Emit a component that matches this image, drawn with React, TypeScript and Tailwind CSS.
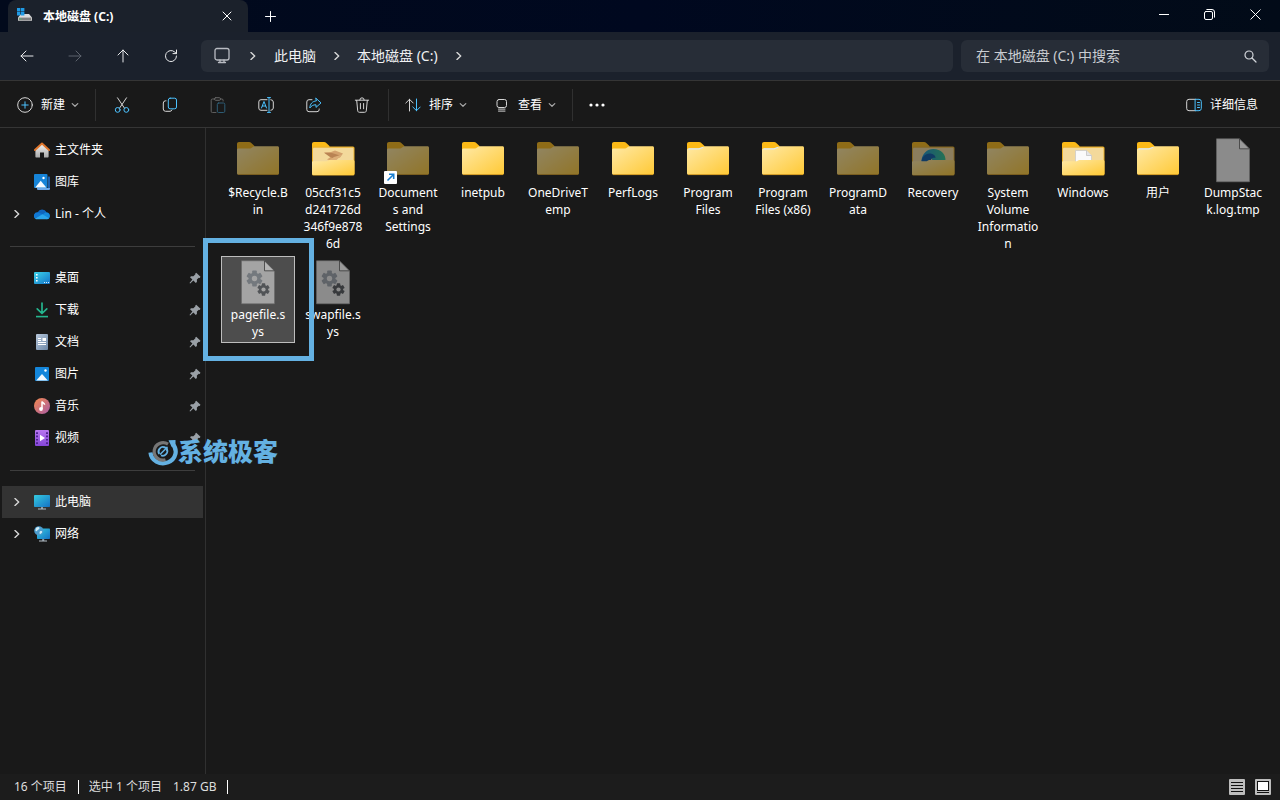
import type { ReactNode } from "react";
import clsx from "clsx";

const BLUE = "#4cc2ff";

/* ---------- small line icons ---------- */

function Line({ children, size = 16, className }: { children: ReactNode; size?: number; className?: string }) {
  return (
    <svg
      width={size}
      height={size}
      viewBox={`0 0 ${size} ${size}`}
      fill="none"
      stroke="currentColor"
      strokeLinecap="round"
      strokeLinejoin="round"
      aria-hidden="true"
      className={clsx("shrink-0", className)}
    >
      {children}
    </svg>
  );
}

function ChevronRight() {
  return (
    <Line size={8} className="text-[#d8d8d8]">
      <path d="M2 0.5 5.7 4 2 7.5" strokeWidth="1.4" />
    </Line>
  );
}

function ChevronDown() {
  return (
    <Line size={8} className="text-[#a8a8a8]">
      <path d="M1.2 2.6 4 5.3 6.8 2.6" strokeWidth="1.2" />
    </Line>
  );
}

function PinIcon() {
  return (
    <svg width="12" height="12" viewBox="0 0 12 12" fill="#9aa0a6" aria-hidden="true" className="mr-0.5 shrink-0">
      <path d="M7.2.7 11.5 4.8 10.7 5.9 9.8 5.7 7.9 7.6 7.9 9.900 6.8 11 4.400 8.600 1.200 11.600.5 11 3.400 7.600 1 5.300 2 4.200 4.400 4.200 6.400 2.300 6.300 1.500Z" />
    </svg>
  );
}

function DriveIcon() {
  return (
    <svg width="16" height="16" viewBox="0 0 16 16" aria-hidden="true" className="shrink-0">
      <path d="M4 6h8l3 3.500H1z" fill="#dcdcdc" />
      <path d="M1 9.200h14v3.600H1z" fill="#c4c4c4" />
      <path d="M2 10.200h12v1.600H2z" fill="#6f6f6f" />
      <path d="M2.400 10.500h2v1h-2z" fill="#49c26a" />
      <path d="M0 0h3.400v3.400H0zM4 0h3.400v3.400H4zM0 4h3.400v3.400H0zM4 4h3.400v3.400H4z" fill="#1f9be6" />
    </svg>
  );
}

/* ---------- sidebar icons ---------- */

function SideIcon({ children }: { children: ReactNode }) {
  return (
    <svg width="16" height="16" viewBox="0 0 16 16" aria-hidden="true" className="shrink-0">
      {children}
    </svg>
  );
}

function HomeIcon() {
  return (
    <SideIcon>
      <defs>
        <linearGradient id="home" x1="0" y1="0" x2="0" y2="1">
          <stop stopColor="#f4f4f4" />
          <stop offset="1" stopColor="#a9a9a9" />
        </linearGradient>
      </defs>
      <path d="M8 1.8 1.4 8v6.600c0 .6.4 1 1 1H6V10.500h4v5.100h3.600c.6 0 1-.4 1-1V8z" fill="url(#home)" />
      <path d="M.9 8 8 1.500 15.100 8" fill="none" stroke="#e0762c" strokeWidth="1.900" strokeLinecap="round" strokeLinejoin="round" />
    </SideIcon>
  );
}

function GalleryIcon() {
  return (
    <SideIcon>
      <path d="M3 14h12V3.500c.6 0 1 .4 1 1V15a1 1 0 0 1-1 1H4a1 1 0 0 1-1-1z" fill="#6aa7e8" />
      <path d="M14 2.500h1c.6 0 1 .4 1 1V14h-2z" fill="#1b5fae" />
      <rect width="13.500" height="14" rx="1" fill="#1684d8" />
      <path d="M1.200 13.500 6.700 6.800l5.600 6.700z" fill="#f2f9ff" />
      <circle cx="9.500" cy="4" r="1.200" fill="#fff" />
    </SideIcon>
  );
}

function CloudIcon() {
  return (
    <SideIcon>
      <path d="M3.600 6.500a5 5 0 0 1 9-.2L9 10H2z" fill="#0f65bd" />
      <path d="M3.800 6.300A3.600 3.600 0 0 0 1 12.600L9.500 8.500z" fill="#1078d4" />
      <path d="M8.700 8.200 12 6.300c2.300 0 4 1.500 4 3.600 0 1.900-1.300 3.300-3.300 3.300z" fill="#1488dc" />
      <path d="M.9 12.400 8.500 8.200l6.600 4c-.6.700-1.400 1-2.400 1H3.600c-1.200 0-2.100-.2-2.700-.8z" fill="#2ba6ec" />
    </SideIcon>
  );
}

function DesktopIcon() {
  return (
    <SideIcon>
      <defs>
        <linearGradient id="desk" x1="0" y1="0" x2="1" y2="1">
          <stop stopColor="#3cd4ea" />
          <stop offset="1" stopColor="#1372c8" />
        </linearGradient>
      </defs>
      <rect y="2" width="16" height="12" rx="1" fill="url(#desk)" />
      <path d="M2 4h1.600v1.600H2zM2 7h1.600v1.600H2zM2 10h1.600v1.600H2z" fill="#fff" />
      <path d="M10 12h1v1h-1zM12 12h1v1h-1zM14 12h1v1h-1z" fill="#d5efff" />
    </SideIcon>
  );
}

function DownloadIcon() {
  return (
    <SideIcon>
      <path d="M8 1v10M3.200 6.800 8 11.500l4.800-4.700" fill="none" stroke="#25b58e" strokeWidth="1.700" strokeLinecap="round" strokeLinejoin="round" />
      <path d="M2 14.600h12" stroke="#25b58e" strokeWidth="1.600" />
    </SideIcon>
  );
}

function DocumentIcon() {
  return (
    <SideIcon>
      <defs>
        <linearGradient id="docs" x1="0" y1="0" x2="1" y2="1">
          <stop stopColor="#b8c8dc" />
          <stop offset="1" stopColor="#6c87a6" />
        </linearGradient>
      </defs>
      <rect x="2" width="12" height="16" rx="1" fill="url(#docs)" />
      <path d="M4 4h3v1H4zM4 6h3v1H4zM4 8h8v1H4zM4 10h8v1H4zM8.500 4H12v3H8.500z" fill="#fff" />
    </SideIcon>
  );
}

function PictureIcon() {
  return (
    <SideIcon>
      <rect x="1" y="1" width="14" height="14" rx="1" fill="#1486da" />
      <path d="M2.200 14.500 8 8l5.800 6.500z" fill="#f3faff" />
      <circle cx="11.500" cy="4.500" r="1.200" fill="#fff" />
    </SideIcon>
  );
}

function MusicIcon() {
  return (
    <SideIcon>
      <defs>
        <linearGradient id="music" x1="0" y1="0" x2="1" y2="1">
          <stop stopColor="#f58a4e" />
          <stop offset="1" stopColor="#a75ba5" />
        </linearGradient>
      </defs>
      <circle cx="8" cy="8" r="8" fill="url(#music)" />
      <circle cx="7" cy="11" r="1.900" fill="#fff" />
      <path d="M8 11V3.500c.4 1.500 2.600 1.500 2.600 3.300" fill="none" stroke="#fff" strokeWidth="1.500" />
    </SideIcon>
  );
}

function VideoIcon() {
  return (
    <SideIcon>
      <defs>
        <linearGradient id="video" x1="0" y1="0" x2="0" y2="1">
          <stop stopColor="#b877ef" />
          <stop offset="1" stopColor="#8546d8" />
        </linearGradient>
      </defs>
      <rect x="1" width="14" height="16" rx="1" fill="url(#video)" />
      <path d="M2 2.300h2v1.600H2zM2 5.600h2v1.600H2zM2 9h2v1.600H2zM2 12.300h2v1.600H2zM12 2.300h2v1.600h-2zM12 5.600h2v1.600h-2zM12 9h2v1.600h-2zM12 12.300h2v1.600h-2z" fill="#4f2391" />
      <path d="M6 4.800 11 8l-5 3.200z" fill="#fff" />
    </SideIcon>
  );
}

function ComputerIcon() {
  return (
    <SideIcon>
      <defs>
        <linearGradient id="pc" x1="0" y1="0" x2="1" y2="1">
          <stop stopColor="#35cbe0" />
          <stop offset="1" stopColor="#1571c4" />
        </linearGradient>
      </defs>
      <path d="M7 13h2v2H7z" fill="#8b98a3" />
      <path d="M4 14.500h8v1H4z" fill="#b5bfc7" />
      <rect y="1" width="16" height="12" rx=".8" fill="url(#pc)" />
    </SideIcon>
  );
}

function NetworkIcon() {
  return (
    <SideIcon>
      <path d="M8.200 13h2v2h-2z" fill="#8b98a3" />
      <path d="M5 14.500h8v1H5z" fill="#b5bfc7" />
      <rect x="3" y="2.500" width="13" height="10.500" rx=".8" fill="url(#pc)" />
      <circle cx="4.800" cy="4.800" r="4.600" fill="#4c9ccd" />
      <path d="M2.200 1.700c1.700-1 3-.7 3.300.3S3.700 4 2.500 5.200C1.700 5.500.9 4.300 2.200 1.700zM6 5.200c1.300-.6 2.300-.2 2.200.9-.3 1-1.200 1.900-2 1.900s-1-2-.2-2.800z" fill="#d4ecf6" />
    </SideIcon>
  );
}

/* ---------- file icons, 48px box ---------- */

type Kind = "folder" | "marked" | "photo" | "edge" | "docs" | "file" | "system";

function Folder({ kind }: { kind: Kind }) {
  const open = kind === "photo" || kind === "edge" || kind === "docs";
  return (
    <>
      <path d="M3 8c0-1.200.8-2 2-2h10c1 0 1.700.3 2.300.9L20.500 10v4H3z" fill="#fbb917" />
      {open ? (
        <>
          <rect x="3" y="10.500" width="42.500" height="29" rx="1.500" fill="#edb22c" />
          <path d="M4 13c0-.8.500-1.300 1.300-1.300h37.900c.8 0 1.300.5 1.300 1.300v15H4z" fill="#f3d99b" />
          {kind === "photo" && (
            <>
              <path d="M15 16.500l7-.5 4-1.500 8 3-3 4-9 3-4-1 5-3.500z" fill="#d4a26d" />
              <path d="M15 16.800l8 .2 8 2.500-5 3.500-5-2z" fill="#b98353" />
              <path d="M18 25.500 25 21l8-2.500-6 6z" fill="#dcae78" />
            </>
          )}
          {kind === "edge" && (
            <>
              <path d="M12.500 25C13 17.500 18 13 24.500 13 32 13 37 18 36.500 25H24l-3-5-3 5z" fill="url(#edgeGreen)" />
              <path d="M12.500 26c0-5 4-9 9-8.500 3 .3 5 2 5 4.500-2.500-1-5 .5-5 4z" fill="#0b5ba8" />
            </>
          )}
          {kind === "docs" && (
            <>
              <path d="M16.500 14.500h11l5 5V27h-16z" fill="#fafafa" stroke="#c9c9c9" strokeWidth=".7" />
              <path d="M27.500 14.500v5h5" fill="#e6e6e6" stroke="#bcbcbc" strokeWidth=".7" />
            </>
          )}
          <path d="M3 26.500c0-.8.500-1.300 1.300-1.300h13.400L20 24h24c.9 0 1.500.6 1.500 1.500v12c0 .9-.6 1.500-1.500 1.500H4.500c-.9 0-1.500-.6-1.500-1.500z" fill="url(#folderFace)" />
        </>
      ) : (
        <>
          <path d="M3 14c0-.9.600-1.500 1.500-1.500H15c1.800 0 2.500-.4 3.500-1.200.9-.8 1.600-1.100 3-1.100h22c.9 0 1.500.6 1.500 1.500v25.600c0 .9-.6 1.500-1.500 1.500h-39c-.9 0-1.500-.6-1.500-1.500z" fill="url(#folderFace)" />
          <path d="M4 38.600h40" stroke="#d99a1e" strokeWidth=".8" />
          {kind === "marked" && <path d="M5 12.900h10l3.500-1.400" stroke="#dceaf5" strokeWidth="1.300" fill="none" strokeLinecap="round" />}
        </>
      )}
    </>
  );
}

function Gear({ x, y, r, color, hole }: { x: number; y: number; r: number; color: string; hole: string }) {
  return (
    <g transform={`translate(${x} ${y}) scale(${r / 8})`}>
      {[0, 60, 120].map((angle) => (
        <rect key={angle} x="-2.300" y="-8" width="4.600" height="16" rx=".8" fill={color} transform={`rotate(${angle})`} />
      ))}
      <circle r="5.900" fill={color} />
      <circle r="2.700" fill={hole} />
    </g>
  );
}

function FileIcon({ kind, faded, shortcut, light }: { kind: Kind; faded?: boolean; shortcut?: boolean; light?: boolean }) {
  const isFile = kind === "file" || kind === "system";
  const paper = light ? "#a4a4a4" : "#8b8b8b";
  return (
    <svg width="48" height="48" viewBox="0 0 48 48" aria-hidden="true" className="shrink-0">
      {isFile ? (
        <>
          <path d="M7.500 2.800h23l10 10v33h-33z" fill={paper} stroke="#686868" strokeWidth=".6" />
          <path d="M30.500 2.800v10h10z" fill={light ? "#b5b5b5" : "#999"} stroke="#3a3a3a" strokeWidth=".8" />
          {kind === "system" && (
            <>
              <Gear x={20.5} y={20.5} r={8} color={light ? "#74797e" : "#5f6368"} hole={paper} />
              <Gear x={29.5} y={31.5} r={6.2} color={light ? "#515457" : "#383a3d"} hole={paper} />
            </>
          )}
        </>
      ) : (
        <g opacity={faded ? 0.52 : 1}>
          <Folder kind={kind} />
        </g>
      )}
      {shortcut && (
        <>
          <rect y="35" width="13" height="13" rx="1" fill="#fff" />
          <path d="M3.500 44.500 9.300 38.700M5 38.300h4.700V43" fill="none" stroke="#1a7fd0" strokeWidth="1.600" />
        </>
      )}
    </svg>
  );
}

/* ---------- data ---------- */

type SideEntry = { label: string; icon: ReactNode; pinned?: boolean; expandable?: boolean; active?: boolean };

const sideGroups: SideEntry[][] = [
  [
    { label: "主文件夹", icon: <HomeIcon /> },
    { label: "图库", icon: <GalleryIcon /> },
    { label: "Lin - 个人", icon: <CloudIcon />, expandable: true },
  ],
  [
    { label: "桌面", icon: <DesktopIcon />, pinned: true },
    { label: "下载", icon: <DownloadIcon />, pinned: true },
    { label: "文档", icon: <DocumentIcon />, pinned: true },
    { label: "图片", icon: <PictureIcon />, pinned: true },
    { label: "音乐", icon: <MusicIcon />, pinned: true },
    { label: "视频", icon: <VideoIcon />, pinned: true },
  ],
  [
    { label: "此电脑", icon: <ComputerIcon />, expandable: true, active: true },
    { label: "网络", icon: <NetworkIcon />, expandable: true },
  ],
];

// breakAt: how many characters stay before the preferred line break
type FileEntry = { name: string; kind: Kind; faded?: boolean; shortcut?: boolean; selected?: boolean; breakAt?: number };

const files: FileEntry[] = [
  { name: "$Recycle.Bin", kind: "folder", faded: true, breakAt: 10 },
  { name: "05ccf31c5d241726d346f9e8786d", kind: "photo" },
  { name: "Documents and Settings", kind: "folder", faded: true, shortcut: true },
  { name: "inetpub", kind: "folder" },
  { name: "OneDriveTemp", kind: "folder", faded: true },
  { name: "PerfLogs", kind: "folder" },
  { name: "Program Files", kind: "marked" },
  { name: "Program Files (x86)", kind: "marked" },
  { name: "ProgramData", kind: "folder", faded: true },
  { name: "Recovery", kind: "edge", faded: true },
  { name: "System Volume Information", kind: "folder", faded: true },
  { name: "Windows", kind: "docs" },
  { name: "用户", kind: "marked" },
  { name: "DumpStack.log.tmp", kind: "file" },
  { name: "pagefile.sys", kind: "system", selected: true, breakAt: 10 },
  { name: "swapfile.sys", kind: "system", breakAt: 10 },
];

/* ---------- page parts ---------- */

function TitleBar() {
  return (
    <header className="flex h-8 bg-linear-to-r from-[#020a1c] via-[#00081f] to-[#020b18] pl-2">
      <div className="flex w-60 items-center rounded-t-lg bg-[#1b212b] pr-[11px] pl-[9px]">
        <DriveIcon />
        <span className="ml-2.5 flex-1 pt-0.5 text-xs font-bold">本地磁盘 (C:)</span>
        <button type="button" aria-label="关闭标签页" className="flex size-5 items-center justify-center">
          <Line size={10}>
            <path d="M1 1l8 8M9 1 1 9" />
          </Line>
        </button>
      </div>
      <button type="button" aria-label="新建标签页" className="flex w-11 items-center justify-center">
        <Line size={11}>
          <path d="M5.500.5v10M.5 5.500h10" />
        </Line>
      </button>
      <div className="ml-auto flex pb-1">
        <button type="button" aria-label="最小化" className="flex w-12 items-center justify-center">
          <Line size={10}>
            <path d="M0 5.500h10" />
          </Line>
        </button>
        <button type="button" aria-label="还原" className="flex w-[42px] items-center justify-center">
          <Line size={11}>
            <rect x=".5" y="2.500" width="8" height="8" rx="1.500" />
            <path d="M2.800.5H8a2.500 2.500 0 0 1 2.500 2.500v5.200" />
          </Line>
        </button>
        <button type="button" aria-label="关闭" className="flex w-[50px] items-center justify-center">
          <Line size={11}>
            <path d="M.8.8l9.400 9.400M10.200.8.8 10.200" />
          </Line>
        </button>
      </div>
    </header>
  );
}

function NavButton({ label, dim, children }: { label: string; dim?: boolean; children: ReactNode }) {
  return (
    <button
      type="button"
      aria-label={label}
      disabled={dim}
      className={clsx("flex w-12 items-center justify-center", dim ? "text-[#5d636d]" : "text-[#e8e9eb]")}
    >
      <Line size={14}>{children}</Line>
    </button>
  );
}

function AddressRow() {
  return (
    <div className="flex h-12 bg-[#1b212c] py-2 pr-[11px] pl-[3px]">
      <NavButton label="后退">
        <path d="M13 7H1M6 2 1 7l5 5" />
      </NavButton>
      <NavButton label="前进" dim>
        <path d="M1 7h12M8 2l5 5-5 5" />
      </NavButton>
      <NavButton label="向上">
        <path d="M7 13V1M2 6l5-5 5 5" />
      </NavButton>
      <NavButton label="刷新">
        <path d="M12.500 7A5.500 5.500 0 1 1 10.800 3.100L12.500 4.600M12.500 1v3.600H9" />
      </NavButton>
      <nav aria-label="路径" className="ml-1.5 flex flex-1 items-center rounded-md bg-[#272d37] pl-3 text-sm text-[#f0f1f3]">
        <Line size={18} className="text-[#b9bcc2]">
          <rect x="2" y="1.500" width="14" height="11.500" rx="2" strokeWidth="1.300" />
          <path d="M7 13v2.300M11 13v2.300M5.500 15.500h7" strokeWidth="1.300" />
        </Line>
        <span className="ml-[18px] flex">
          <ChevronRight />
        </span>
        <a href="#pc" className="ml-[17px]">此电脑</a>
        <span className="ml-[17px] flex">
          <ChevronRight />
        </span>
        <a href="#c" className="ml-4">本地磁盘 (C:)</a>
        <span className="ml-[17px] flex">
          <ChevronRight />
        </span>
      </nav>
      <label className="ml-2 flex w-[308px] items-center rounded-md bg-[#272d37] pr-3 pl-[15px]">
        <input
          type="text"
          aria-label="搜索"
          placeholder="在 本地磁盘 (C:) 中搜索"
          className="min-w-0 flex-1 bg-transparent text-sm outline-none placeholder:text-[#c9ccd1]"
        />
        <Line size={14} className="text-[#d3d6db]">
          <circle cx="6" cy="6" r="4" strokeWidth="1.200" />
          <path d="M9 9l4 4" strokeWidth="1.200" />
        </Line>
      </label>
    </div>
  );
}

function ToolButton({ label, children, dim }: { label: string; children: ReactNode; dim?: boolean }) {
  return (
    <button
      type="button"
      aria-label={label}
      disabled={dim}
      className={clsx("flex w-12 items-center justify-center self-stretch text-[#d6d6d6]", dim && "opacity-40")}
    >
      <Line>{children}</Line>
    </button>
  );
}

function Divider() {
  return <span className="h-8 w-px bg-[#303030]" />;
}

function Toolbar() {
  return (
    <div className="flex h-12 items-center border-y border-[#353535] bg-[#191919] pt-0.5 text-xs">
      <button type="button" className="flex items-center pr-4 pl-[17px]">
        <Line>
          <circle cx="8" cy="8" r="7.300" stroke="#d6d6d6" />
          <path d="M8 4.800v6.400M4.800 8h6.400" stroke={BLUE} />
        </Line>
        <span className="mr-1.5 ml-2">新建</span>
        <ChevronDown />
      </button>
      <Divider />
      <div className="flex self-stretch px-0.5">
        <ToolButton label="剪切">
          <path d="M3.500.8l7 10.400M12.500.8l-7 10.400" />
          <circle cx="3.700" cy="12.900" r="2.400" stroke={BLUE} />
          <circle cx="12.300" cy="12.900" r="2.400" stroke={BLUE} />
        </ToolButton>
        <ToolButton label="复制">
          <path d="M4 3.800H3.500A2.300 2.300 0 0 0 1.300 6v6a2.300 2.300 0 0 0 2.200 2.300H8A2.300 2.300 0 0 0 10 13" />
          <rect x="6.300" y="1.200" width="8.200" height="10.600" rx="1.800" stroke={BLUE} />
        </ToolButton>
        <ToolButton label="粘贴" dim>
          <path d="M4.500 2H2.500a1.300 1.300 0 0 0-1.300 1.300v11a1.300 1.300 0 0 0 1.300 1.300H6M10.500 2h1.300a1.300 1.300 0 0 1 1.300 1.300v.7" />
          <rect x="4.500" y=".7" width="6" height="2.600" rx="1.200" />
          <rect x="7.300" y="6" width="7.500" height="9.500" rx="1.300" stroke={BLUE} />
        </ToolButton>
        <ToolButton label="重命名">
          <path d="M9 2.700H3A2.200 2.200 0 0 0 .8 5v6A2.200 2.200 0 0 0 3 13.300h6M12.800 2.700A2.500 2.500 0 0 1 15.300 5v6a2.500 2.500 0 0 1-2.500 2.300" />
          <path d="M3.500 11 6 4.500 8.500 11M4.300 9h3.400M11 .8v14.400M9.500.6h3M9.500 15.400h3" stroke={BLUE} />
        </ToolButton>
        <ToolButton label="共享">
          <path d="M6 2.700H3A2.200 2.200 0 0 0 .8 5v7.500A2.200 2.200 0 0 0 3 14.700h8a2.200 2.200 0 0 0 2.200-2.200V12" />
          <path d="M10 1.300 15 5.900l-5 4.500V7.800C7 7.700 5.300 9 3.800 11 4 7 6.300 4.200 10 3.900z" stroke={BLUE} />
        </ToolButton>
        <ToolButton label="删除">
          <path d="M1.300 3.200h13.400M5.800 3A2.200 2.200 0 0 1 10.200 3M2.700 3.400l1 10.400c.1.900.8 1.500 1.700 1.500h5.200c.9 0 1.600-.6 1.700-1.500l1-10.400M6.400 6.500v5.300M9.600 6.500v5.300" />
        </ToolButton>
      </div>
      <Divider />
      <button type="button" className="flex items-center pl-4">
        <Line>
          <path d="M4.500 14V2.300M.8 6 4.500 2.300 8.200 6" stroke="#d6d6d6" />
          <path d="M11.500 2v11.700M7.800 10l3.700 3.700L15.200 10" stroke={BLUE} />
        </Line>
        <span className="mr-1.5 ml-2">排序</span>
        <ChevronDown />
      </button>
      <button type="button" className="flex items-center pr-4 pl-[27px]">
        <Line>
          <rect x="3" y="2.500" width="9.500" height="8" rx="2" stroke="#d6d6d6" />
          <path d="M4.500 12.100H11M4.500 14.100H11" stroke="#d6d6d6" />
        </Line>
        <span className="mr-1.5 ml-2">查看</span>
        <ChevronDown />
      </button>
      <Divider />
      <button type="button" aria-label="更多" className="flex w-12 justify-center">
        <svg width="18" height="4" viewBox="0 0 18 4" fill="#fff" aria-hidden="true">
          <circle cx="3" cy="2" r="1.600" />
          <circle cx="9" cy="2" r="1.600" />
          <circle cx="15" cy="2" r="1.600" />
        </svg>
      </button>
      <button type="button" className="mr-[22px] ml-auto flex items-center gap-2">
        <Line>
          <path d="M9.500 2.300H3A2.300 2.300 0 0 0 .7 4.600v6.800A2.300 2.300 0 0 0 3 13.700h6.500" stroke="#d6d6d6" />
          <path d="M9.500 2.300H13a2.300 2.300 0 0 1 2.300 2.300v6.800a2.300 2.300 0 0 1-2.300 2.300H9.500zM11.500 5.500h2M11.500 8h2M11.500 10.500h2" stroke={BLUE} />
        </Line>
        详细信息
      </button>
    </div>
  );
}

function Sidebar() {
  return (
    <aside className="w-[206px] shrink-0 border-r border-[#303030] pt-1.5 pr-0.5 pl-0.5 text-xs">
      {sideGroups.map((group, index) => (
        <div key={index}>
          {index > 0 && (
            <div className="flex h-8 items-center px-2">
              <hr className="w-full border-[#3d3d3d]" />
            </div>
          )}
          <ul>
            {group.map((entry) => (
              <li key={entry.label}>
                <a href={`#${entry.label}`} className={clsx("flex h-8 items-center", entry.active && "bg-[#333]")}>
                  <span className="flex w-8 pl-[11px]">{entry.expandable && <ChevronRight />}</span>
                  {entry.icon}
                  <span className="ml-[5px] flex-1">{entry.label}</span>
                  {entry.pinned && <PinIcon />}
                </a>
              </li>
            ))}
          </ul>
        </div>
      ))}
    </aside>
  );
}

function FileTile({ file }: { file: FileEntry }) {
  const { name, breakAt = name.length } = file;
  return (
    <li>
      <button
        type="button"
        className={clsx(
          "relative flex w-[74px] flex-col items-center border pt-px pb-0.5",
          file.selected ? "border-[#bdbdbd] bg-[#4d4d4d]" : "border-transparent",
        )}
      >
        <FileIcon kind={file.kind} faded={file.faded} shortcut={file.shortcut} light={file.selected} />
        <span className={clsx("text-center text-xs/[17px] wrap-anywhere", file.breakAt ? "w-[60px]" : "w-[62px]")}>
          {name.slice(0, breakAt)}
          {file.breakAt && <wbr />}
          {name.slice(breakAt)}
        </span>
        {file.selected && (
          <span className="pointer-events-none absolute -inset-y-[19px] -right-5 -left-[19px] z-10 border-5 border-[#64b1e2]" />
        )}
      </button>
    </li>
  );
}

function Watermark() {
  return (
    <div className="pointer-events-none absolute top-[309px] left-[148px] flex items-center text-[#64b1e2]">
      <svg width="30" height="30" viewBox="0 0 30 30" fill="none" aria-hidden="true">
        <path d="M2.500 15.500A12.600 11.600 0 1 0 24.500 7" stroke="#64b1e2" strokeWidth="4.200" />
        <path d="M20.500 3.200 27.500 3v7.500l-4-1z" fill="#64b1e2" />
        <path d="M17.500 22.800A8.900 8.700 0 1 1 20 7.200" stroke="#767676" strokeWidth="3.200" />
        <path d="M11.200 17a4.600 4.600 0 0 1 5.800-6.600M18.800 12a4.600 4.600 0 0 1-5.800 6.400" stroke="#64b1e2" strokeWidth="1.800" />
        <path d="M12 17.500 18.500 11M15.500 10.500h3.500V14" stroke="#64b1e2" strokeWidth="1.500" />
      </svg>
      <span className="-mt-0.5 text-[25px]/8 font-black">系统极客</span>
    </div>
  );
}

function StatusBar() {
  return (
    <footer className="flex h-[26px] items-center bg-[#1c1c1c] pr-[9px] pl-3.5 text-xs text-[#dedede]">
      <span>16 个项目</span>
      <span className="mr-2.5 ml-[11px] h-3.5 w-px bg-white" />
      <span>选中 1 个项目</span>
      <span className="ml-[11px]">1.87 GB</span>
      <span className="ml-[11px] h-3.5 w-px bg-white" />
      <div className="ml-auto flex gap-2.5">
        <button type="button" aria-label="详细信息视图">
          <svg width="16" height="16" viewBox="0 0 16 16" aria-hidden="true">
            <rect width="16" height="16" rx="1" fill="#bdbdbd" />
            <path d="M2 3.500h12M2 6.500h12M2 9.500h12M2 12.500h12" stroke="#111" />
          </svg>
        </button>
        <button type="button" aria-label="大图标视图">
          <svg width="16" height="16" viewBox="0 0 16 16" aria-hidden="true">
            <rect width="16" height="16" rx="1" fill="#bdbdbd" />
            <rect x="2.500" y="2.500" width="11" height="9" fill="#fff" stroke="#111" />
            <path d="M2 13.500h12" stroke="#111" />
          </svg>
        </button>
      </div>
    </footer>
  );
}

export default function App() {
  return (
    <div className="flex min-h-screen flex-col bg-[#191919] font-['Noto_Sans','Noto_Sans_CJK_SC',sans-serif] text-white">
      <svg width="0" height="0" className="absolute" aria-hidden="true">
        <defs>
          <linearGradient id="folderFace" x1="0" y1="0" x2="1" y2="1">
            <stop stopColor="#ffe9a6" />
            <stop offset="1" stopColor="#ffc935" />
          </linearGradient>
          <linearGradient id="edgeGreen" x1="0" y1="0" x2="1" y2="0">
            <stop stopColor="#1a8fd0" />
            <stop offset="1" stopColor="#2fc48a" />
          </linearGradient>
        </defs>
      </svg>
      <TitleBar />
      <AddressRow />
      <Toolbar />
      <div className="relative flex flex-1">
        <Sidebar />
        <main className="min-w-0 flex-1 pt-1.5 pl-[15px]">
          <ul className="flex flex-wrap items-start gap-px">
            {files.map((file) => (
              <FileTile key={file.name} file={file} />
            ))}
          </ul>
        </main>
        <Watermark />
      </div>
      <StatusBar />
    </div>
  );
}
